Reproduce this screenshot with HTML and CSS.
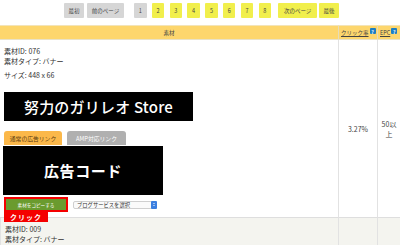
FILE: index.html
```html
<!DOCTYPE html>
<html lang="ja">
<head>
<meta charset="utf-8">
<link rel="stylesheet" href="styles.css">
</head>
<body>
<nav class="pager">
  <a class="pg gray w-first">最初</a>
  <a class="pg gray w-prev">前のページ</a>
  <div class="nums">
    <a class="pg gray num">1</a>
    <a class="pg yel num">2</a>
    <a class="pg yel num">3</a>
    <a class="pg yel num">4</a>
    <a class="pg yel num">5</a>
    <a class="pg yel num">6</a>
    <a class="pg yel num">7</a>
    <a class="pg yel num">8</a>
  </div>
  <a class="pg yel w-next">次のページ</a>
  <a class="pg yel w-last">最後</a>
</nav>

<div class="grid">
  <div class="hcell h-main">素材</div>
  <div class="hcell h-side"><span class="u">クリック率</span><i class="q">?</i></div>
  <div class="hcell h-side"><span class="u">EPC</span><i class="q">?</i></div>

  <div class="cell main">
    <div class="meta">素材ID: 076</div>
    <div class="meta">素材タイプ: バナー</div>
    <div class="meta size">サイズ: 448 x 66</div>
    <div class="banner">努力のガリレオ Store</div>
    <div class="tabs">
      <span class="tab on">通常の広告リンク</span>
      <span class="tab off">AMP対応リンク</span>
    </div>
    <div class="adcode">広告コード</div>
    <div class="actions">
      <div class="copywrap">
        <button class="copy">素材をコピーする</button>
        <span class="click">クリック</span>
      </div>
      <div class="select"><span class="sel-text">ブログサービスを選択</span><span class="sel-arrow"><i class="up"></i><i class="down"></i></span></div>
    </div>
  </div>
  <div class="cell num-cell">3.27%</div>
  <div class="cell num-cell epc">50以上</div>

  <div class="cell main alt">
    <div class="meta">素材ID: 009</div>
    <div class="meta">素材タイプ: バナー</div>
  </div>
  <div class="cell alt"></div>
  <div class="cell alt"></div>
</div>
</body>
</html>
```

FILE: styles.css
```css
* { box-sizing: border-box; }
html, body { margin: 0; padding: 0; background: #fff; }
body {
  font-family: "Noto Sans CJK JP", "Noto Sans", sans-serif;
  color: #333;
  width: 400px;
  height: 245px;
  overflow: hidden;
}

.pager {
  display: flex;
  align-items: center;
  padding: 3px 0 0 64px;
  height: 18px;
}
.pg {
  display: flex;
  align-items: center;
  justify-content: center;
  height: 15px;
  font-size: 5.5px;
  color: #444;
  border-radius: 1px;
}
.gray { background: #d6d6d6; }
.yel { background: #f1ef4c; }
.w-first { width: 20px; margin-right: 3px; }
.w-prev { width: 37px; margin-right: 10px; }
.nums { display: flex; gap: 5.3px; margin-right: 7px; }
.num { width: 12.5px; }
.w-next { width: 39px; margin-right: 2px; }
.w-last { width: 20px; }

.grid {
  margin-top: 7px;
  display: grid;
  grid-template-columns: 338px 39px 23px;
}
.hcell {
  height: 15px;
  background: #fdd66d;
  border-top: 1px solid #f3e4b8;
  border-bottom: 1px solid #e9e2c8;
  font-size: 5.5px;
  color: #444;
  display: flex;
  align-items: center;
  justify-content: center;
}
.h-side { border-left: 1px solid #e6dcb8; justify-content: flex-start; padding-left: 2px; }
.u { text-decoration: underline; }
.q {
  font-style: normal;
  width: 6px;
  height: 6px;
  background: #1d7ec2;
  color: #fff;
  font-size: 5px;
  font-weight: 700;
  display: inline-flex;
  align-items: center;
  justify-content: center;
  border-radius: 1px;
  margin-left: 1px;
  margin-top: -3px;
}

.cell {
  border-bottom: 1px solid #dedede;
  font-size: 7px;
}
.cell + .cell { border-left: 1px solid #e2e2e2; }
.main { padding: 6px 4px 5px; }
.meta { font-size: 7px; line-height: 10px; color: #333; }
.size { margin-top: 4px; }

.banner {
  margin-top: 12px;
  width: 189px;
  height: 29px;
  background: #000;
  color: #fff;
  font-size: 15px;
  font-weight: 500;
  display: flex;
  align-items: center;
  justify-content: center;
  letter-spacing: 0.2px;
}

.tabs { margin-top: 10px; display: flex; gap: 5px; }
.tab {
  height: 14px;
  display: flex;
  align-items: center;
  justify-content: center;
  font-size: 5.8px;
  border-radius: 3px 3px 0 0;
}
.tab.on { width: 58px; background: #fbb84a; color: #5a3a10; }
.tab.off { width: 59px; background: #b0b0b0; color: #fff; }

.adcode {
  margin-top: 1px;
  margin-left: -1px;
  width: 160px;
  height: 49px;
  background: #000;
  color: #fff;
  font-size: 15px;
  font-weight: 700;
  letter-spacing: 0.6px;
  display: flex;
  align-items: center;
  justify-content: center;
}

.actions { margin-top: 2px; display: flex; align-items: center; gap: 5px; }
.copywrap { position: relative; }
.copy {
  display: block;
  width: 64px;
  height: 15px;
  margin: 0;
  padding: 0;
  border: 2px solid #f40000;
  background: #6a9b2e;
  color: #fff;
  font-family: inherit;
  font-size: 4.6px;
}
.click {
  position: absolute;
  left: 0;
  top: 100%;
  width: 44px;
  height: 10px;
  background: #f40000;
  color: #fff;
  font-size: 7px;
  font-weight: 700;
  letter-spacing: 1px;
  display: flex;
  align-items: center;
  justify-content: center;
  z-index: 2;
}
.select {
  width: 84px;
  height: 8px;
  border: 1px solid #cfcfcf;
  border-radius: 2px;
  background: #fafafa;
  display: flex;
  align-items: center;
  justify-content: space-between;
  padding-left: 3px;
}
.sel-text { font-size: 5.3px; color: #333; }
.sel-arrow {
  width: 6px;
  height: 8px;
  margin-right: -1px;
  background: #3a7fe0;
  border-radius: 1px;
  display: flex;
  flex-direction: column;
  align-items: center;
  justify-content: center;
  gap: 1px;
}
.up, .down { width: 0; height: 0; border-left: 1.3px solid transparent; border-right: 1.3px solid transparent; }
.up { border-bottom: 1.5px solid #fff; }
.down { border-top: 1.5px solid #fff; }

.num-cell {
  display: flex;
  align-items: center;
  justify-content: center;
  font-size: 7px;
  color: #444;
}
.epc { padding: 0 3px; text-align: center; line-height: 10px; }

.alt { background: #f4f4ef; border-bottom: none; min-height: 27px; }
.main.alt { padding-top: 6px; }
```
